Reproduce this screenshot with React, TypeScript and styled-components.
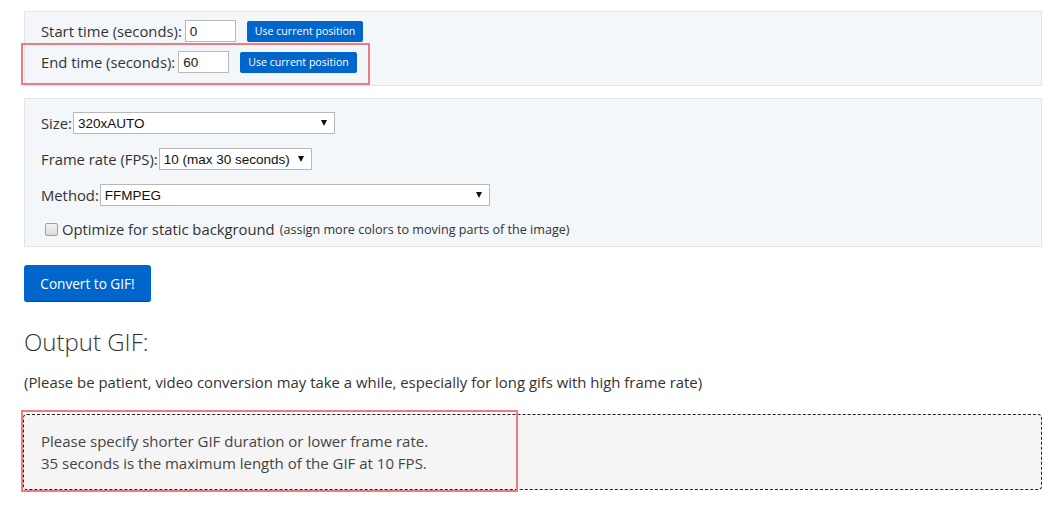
import React from 'react'
import styled, { createGlobalStyle } from 'styled-components'

const GlobalStyle = createGlobalStyle`
  html, body {
    margin: 0;
    padding: 0;
    background: #ffffff;
  }
  body {
    font-family: 'Open Sans', 'Noto Sans', sans-serif;
    font-size: 15px;
    color: #333333;
  }
`

const Page = styled.div`
  position: relative;
  width: 1055px;
  height: 511px;
  padding: 11px 13px 0 24px;
  box-sizing: border-box;
  display: flex;
  flex-direction: column;
`

const Panel = styled.div<{ $gap: number; $pad: string }>`
  background: #f4f7fa;
  border: 1px solid #e1e5e9;
  padding: ${(p) => p.$pad};
  display: flex;
  flex-direction: column;
  gap: ${(p) => p.$gap}px;
  margin-bottom: 12px;
`

const Row = styled.div`
  display: flex;
  align-items: center;
  height: 22px;
  font-size: 14.8px;
  white-space: nowrap;
`

const Label = styled.span`
  margin-right: 3px;
`

const TextInput = styled.input`
  width: 51px;
  height: 22px;
  box-sizing: border-box;
  border: 1px solid #b8b8b8;
  padding: 0 4px;
  font-family: 'Liberation Sans', Arial, sans-serif;
  font-size: 13.5px;
  color: #222;
  margin-right: 11px;
  background: #fff;
`

const SmallButton = styled.button`
  height: 21px;
  padding: 0 8px;
  border: none;
  border-radius: 2px;
  background: #0066cc;
  color: #fff;
  font-family: 'Open Sans', sans-serif;
  font-size: 10.6px;
  cursor: pointer;
`

const Select = styled.div<{ $w: number }>`
  width: ${(p) => p.$w}px;
  height: 22px;
  box-sizing: border-box;
  border: 1px solid #b8b8b8;
  background: #fff;
  display: flex;
  align-items: center;
  justify-content: space-between;
  padding: 0 7px 0 4px;
  font-family: 'Liberation Sans', Arial, sans-serif;
  font-size: 13.5px;
  color: #111;
  margin-left: 1px;
`

const Caret = styled.span`
  width: 0;
  height: 0;
  border-left: 3.5px solid transparent;
  border-right: 3.5px solid transparent;
  border-top: 6px solid #111;
`

const CheckRow = styled.label`
  display: flex;
  align-items: center;
  height: 18px;
  padding-left: 4px;
  font-size: 14.8px;
  white-space: nowrap;
`

const CheckBox = styled.span`
  width: 11px;
  height: 11px;
  border: 1px solid #a0a0a0;
  border-radius: 2px;
  background: linear-gradient(#f4f4f4, #dcdcdc);
  margin-right: 4px;
`

const Hint = styled.span`
  font-size: 12.6px;
  margin-left: 5px;
`

const ConvertButton = styled.button`
  align-self: flex-start;
  margin-top: 6px;
  width: 127px;
  height: 37px;
  border: none;
  border-bottom: 1px solid #004a99;
  border-radius: 3px;
  background: #0066cc;
  color: #fff;
  font-family: 'Open Sans', sans-serif;
  font-size: 13.6px;
  cursor: pointer;
`

const Heading = styled.h2`
  margin: 25px 0 0 0;
  font-weight: 300;
  font-size: 24px;
  line-height: 30px;
  color: #333;
`

const Note = styled.p`
  margin: 15px 0 0 0;
  font-size: 14.9px;
  line-height: 20px;
`

const OutputBox = styled.div`
  margin-top: 22px;
  margin-left: -1px;
  height: 76px;
  box-sizing: border-box;
  background: #f5f5f5;
  border: 1px dashed #222;
  border-radius: 4px;
  padding: 15px 17px;
  font-size: 15px;
  line-height: 22px;
  color: #444;
`

const Highlight = styled.div<{ $x: number; $y: number; $w: number; $h: number }>`
  position: absolute;
  left: ${(p) => p.$x}px;
  top: ${(p) => p.$y}px;
  width: ${(p) => p.$w}px;
  height: ${(p) => p.$h}px;
  box-sizing: border-box;
  border: 2px solid #ef7a82;
  pointer-events: none;
`

export default function App() {
  return (
    <>
      <GlobalStyle />
      <Page>
        <Panel $gap={9} $pad="8px 16px 12px 16px">
          <Row>
            <Label>Start time (seconds):</Label>
            <TextInput defaultValue="0" />
            <SmallButton>Use current position</SmallButton>
          </Row>
          <Row>
            <Label>End time (seconds):</Label>
            <TextInput defaultValue="60" />
            <SmallButton>Use current position</SmallButton>
          </Row>
        </Panel>
        <Panel $gap={14} $pad="13px 16px 8px 16px">
          <Row>
            <span>Size:</span>
            <Select $w={262}>
              320xAUTO
              <Caret />
            </Select>
          </Row>
          <Row>
            <span>Frame rate (FPS):</span>
            <Select $w={153}>
              10 (max 30 seconds)
              <Caret />
            </Select>
          </Row>
          <Row>
            <span>Method:</span>
            <Select $w={390}>
              FFMPEG
              <Caret />
            </Select>
          </Row>
          <CheckRow>
            <CheckBox />
            Optimize for static background
            <Hint>(assign more colors to moving parts of the image)</Hint>
          </CheckRow>
        </Panel>
        <ConvertButton>Convert to GIF!</ConvertButton>
        <Heading>Output GIF:</Heading>
        <Note>
          (Please be patient, video conversion may take a while, especially for long gifs with
          high frame rate)
        </Note>
        <OutputBox>
          Please specify shorter GIF duration or lower frame rate.
          <br />
          35 seconds is the maximum length of the GIF at 10 FPS.
        </OutputBox>
        <Highlight $x={21} $y={43} $w={349} $h={42} />
        <Highlight $x={21} $y={410} $w={497} $h={82} />
      </Page>
    </>
  )
}
